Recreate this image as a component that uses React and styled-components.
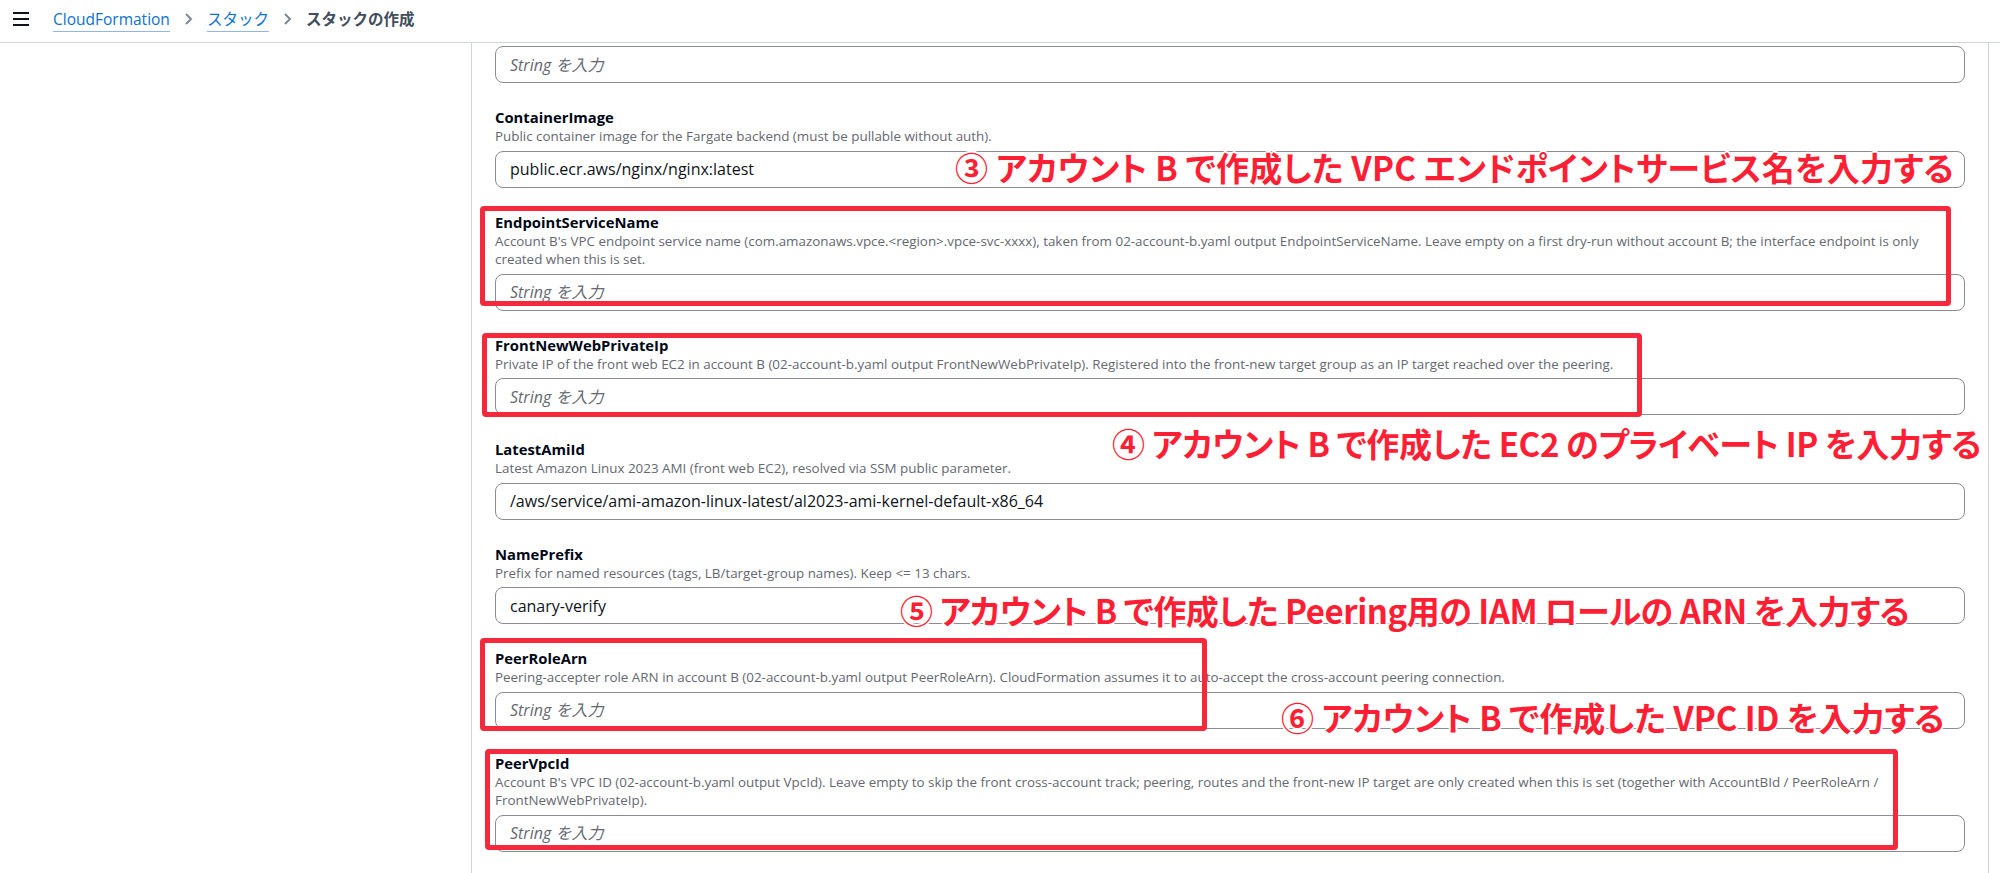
import styled, { createGlobalStyle } from "styled-components";

const GlobalStyle = createGlobalStyle`
  html, body {
    margin: 0;
    padding: 0;
    background: #ffffff;
  }
  body {
    font-family: "Open Sans", "Noto Sans CJK JP", sans-serif;
    color: #000716;
  }
  * {
    box-sizing: border-box;
  }
`;

const Page = styled.div`
  width: 2000px;
  height: 873px;
  display: flex;
  flex-direction: column;
  overflow: hidden;
`;

const TopBar = styled.header`
  height: 43px;
  flex: none;
  display: flex;
  align-items: center;
  padding: 0 0 5px 13px;
  border-bottom: 1px solid #d1d5db;
`;

const MenuButton = styled.button`
  width: 16px;
  height: 14px;
  padding: 0;
  border: 0;
  background: none;
  display: flex;
  flex-direction: column;
  justify-content: space-between;
  margin-right: 24px;

  span {
    display: block;
    height: 2px;
    background: #0f141a;
  }
`;

const Crumbs = styled.nav`
  display: flex;
  align-items: center;
  gap: 14px;
  font-size: 15.5px;
  line-height: 22px;
`;

const CrumbLink = styled.a`
  color: #0972d3;
  text-decoration: underline;
  text-decoration-color: #8fb7ee;
  text-underline-offset: 6px;
  text-decoration-thickness: 1px;
`;

const CrumbCurrent = styled.span`
  color: #414d5c;
  font-weight: 600;
`;

const Chevron = () => (
  <svg width="9" height="14" viewBox="0 0 9 14" fill="none">
    <path d="M2 2l5 5-5 5" stroke="#7d8998" strokeWidth="2" />
  </svg>
);

const Body = styled.div`
  flex: 1;
  display: flex;
  min-height: 0;
`;

const Sidebar = styled.aside`
  width: 472px;
  flex: none;
  border-right: 1px solid #d1d5db;
`;

const Main = styled.main`
  position: relative;
  width: 1516px;
  flex: none;
  padding: 3px 23px 0 23px;
  display: flex;
  flex-direction: column;
  gap: 24px;
`;

const Gutter = styled.div`
  flex: 1;
  border-left: 1px solid #d1d5db;
`;

const Field = styled.div`
  display: flex;
  flex-direction: column;
`;

const Label = styled.div`
  font-size: 14.8px;
  line-height: 20px;
  font-weight: 700;
  color: #000716;
`;

const Description = styled.div`
  font-size: 13.4px;
  line-height: 18.5px;
  color: #656871;
  margin-bottom: 5px;
`;

const Input = styled.input`
  width: 100%;
  height: 37px;
  border: 1px solid #8c8c94;
  border-radius: 8px;
  padding: 0 14px;
  font-family: inherit;
  font-size: 16px;
  color: #0f141a;
  background: #ffffff;
  outline: none;

  &::placeholder {
    color: #656871;
    font-style: italic;
  }
`;

// 注釈用の赤枠
const Frame = styled.div`
  position: absolute;
  left: ${(p) => p.$x}px;
  top: ${(p) => p.$y}px;
  width: ${(p) => p.$w}px;
  height: ${(p) => p.$h}px;
  border: 5px solid #f5283c;
  border-radius: 4px;
  pointer-events: none;
`;

// 注釈テキスト（白フチの赤文字）
const Note = styled.div`
  position: absolute;
  left: ${(p) => p.$x}px;
  top: ${(p) => p.$y}px;
  font-family: "Noto Sans CJK JP", sans-serif;
  font-weight: 700;
  font-size: 33px;
  line-height: 36px;
  letter-spacing: ${(p) => p.$ls}px;
  color: #ff1f35;
  white-space: nowrap;
  font-feature-settings: "palt";
  text-shadow:
    -2px 0 #fff, 2px 0 #fff, 0 -2px #fff, 0 2px #fff,
    -1px -1px #fff, 1px 1px #fff, -1px 1px #fff, 1px -1px #fff;
`;

const fields = [
  { value: "", placeholder: "String を入力" },
  {
    name: "ContainerImage",
    desc: ["Public container image for the Fargate backend (must be pullable without auth)."],
    value: "public.ecr.aws/nginx/nginx:latest",
  },
  {
    name: "EndpointServiceName",
    desc: [
      "Account B's VPC endpoint service name (com.amazonaws.vpce.<region>.vpce-svc-xxxx), taken from 02-account-b.yaml output EndpointServiceName. Leave empty on a first dry-run without account B; the interface endpoint is only",
      "created when this is set.",
    ],
    value: "",
  },
  {
    name: "FrontNewWebPrivateIp",
    desc: [
      "Private IP of the front web EC2 in account B (02-account-b.yaml output FrontNewWebPrivateIp). Registered into the front-new target group as an IP target reached over the peering.",
    ],
    value: "",
  },
  {
    name: "LatestAmiId",
    desc: ["Latest Amazon Linux 2023 AMI (front web EC2), resolved via SSM public parameter."],
    value: "/aws/service/ami-amazon-linux-latest/al2023-ami-kernel-default-x86_64",
  },
  {
    name: "NamePrefix",
    desc: ["Prefix for named resources (tags, LB/target-group names). Keep <= 13 chars."],
    value: "canary-verify",
  },
  {
    name: "PeerRoleArn",
    desc: [
      "Peering-accepter role ARN in account B (02-account-b.yaml output PeerRoleArn). CloudFormation assumes it to auto-accept the cross-account peering connection.",
    ],
    value: "",
  },
  {
    name: "PeerVpcId",
    desc: [
      "Account B's VPC ID (02-account-b.yaml output VpcId). Leave empty to skip the front cross-account track; peering, routes and the front-new IP target are only created when this is set (together with AccountBId / PeerRoleArn /",
      "FrontNewWebPrivateIp).",
    ],
    value: "",
  },
];

const frames = [
  { x: 8, y: 163, w: 1471, h: 100 },
  { x: 10, y: 290, w: 1160, h: 84 },
  { x: 8, y: 595, w: 727, h: 93 },
  { x: 13, y: 706, w: 1413, h: 101 },
];

const notes = [
  { x: 483, y: 106, ls: 0.25, text: "③ アカウント B で作成した VPC エンドポイントサービス名を入力する" },
  { x: 640, y: 382, ls: -0.35, text: "④ アカウント B で作成した EC2 のプライベート IP を入力する" },
  { x: 428, y: 549, ls: -0.45, text: "⑤ アカウント B で作成した Peering用の IAM ロールの ARN を入力する" },
  { x: 809, y: 656, ls: 0, text: "⑥ アカウント B で作成した VPC ID を入力する" },
];

export default function App() {
  return (
    <Page>
      <GlobalStyle />
      <TopBar>
        <MenuButton aria-label="menu">
          <span />
          <span />
          <span />
        </MenuButton>
        <Crumbs>
          <CrumbLink>CloudFormation</CrumbLink>
          <Chevron />
          <CrumbLink>スタック</CrumbLink>
          <Chevron />
          <CrumbCurrent>スタックの作成</CrumbCurrent>
        </Crumbs>
      </TopBar>
      <Body>
        <Sidebar />
        <Main>
          {fields.map((f, i) => (
            <Field key={i}>
              {f.name ? <Label>{f.name}</Label> : null}
              {f.desc ? (
                <Description>
                  {f.desc.map((line, j) => (
                    <div key={j}>{line}</div>
                  ))}
                </Description>
              ) : null}
              <Input
                readOnly
                value={f.value}
                placeholder={f.placeholder ?? "String を入力"}
              />
            </Field>
          ))}
          {frames.map((fr, i) => (
            <Frame key={i} $x={fr.x} $y={fr.y} $w={fr.w} $h={fr.h} />
          ))}
          {notes.map((n, i) => (
            <Note key={i} $x={n.x} $y={n.y} $ls={n.ls}>
              {n.text}
            </Note>
          ))}
        </Main>
        <Gutter />
      </Body>
    </Page>
  );
}
